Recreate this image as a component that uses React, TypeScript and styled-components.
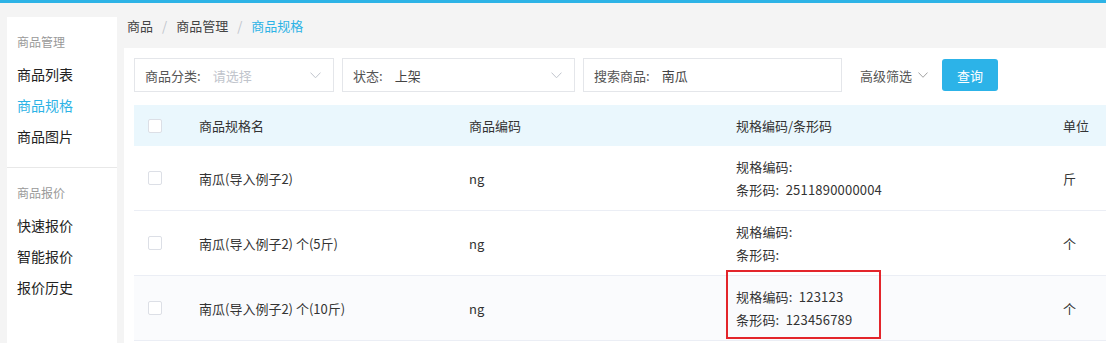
import React from 'react';
import styled, { createGlobalStyle } from 'styled-components';

const GlobalStyle = createGlobalStyle`
  html, body {
    margin: 0;
    padding: 0;
  }
  body {
    background: #f4f4f4;
    font-family: "Noto Sans CJK SC", "Noto Sans", sans-serif;
    font-size: 13px;
    color: #333333;
  }
`;

const TopLine = styled.div`
  height: 3px;
  background: #2db3e6;
`;

const Page = styled.div`
  display: flex;
  align-items: flex-start;
  height: 340px;
  overflow: hidden;
`;

const Sidebar = styled.aside`
  width: 110px;
  margin: 14px 0 0 7px;
  background: #ffffff;
  height: 400px;
  flex-shrink: 0;
`;

const MenuGroup = styled.div`
  padding: 16px 0 15px 10px;
  & + & {
    border-top: 1px solid #e8e8e8;
  }
`;

const GroupTitle = styled.div`
  font-size: 12px;
  line-height: 18px;
  color: #999999;
  margin-bottom: 8px;
`;

const MenuItem = styled.div<{ $active?: boolean }>`
  font-size: 14px;
  line-height: 31px;
  color: ${(p) => (p.$active ? '#2db3e6' : '#222222')};
  cursor: pointer;
`;

const Main = styled.main`
  flex: 1;
  margin-left: 7px;
  min-width: 0;
`;

const Breadcrumb = styled.div`
  height: 45px;
  display: flex;
  align-items: center;
  padding-left: 3px;
  font-size: 13px;
  color: #444444;
`;

const Crumb = styled.span<{ $current?: boolean }>`
  color: ${(p) => (p.$current ? '#2db3e6' : '#444444')};
`;

const Sep = styled.span`
  margin: 0 9px;
  color: #c0c4cc;
`;

const Panel = styled.div`
  background: #ffffff;
  padding: 10px 0 0 10px;
  height: 300px;
`;

const FilterRow = styled.div`
  display: flex;
  align-items: center;
  height: 34px;
`;

const Field = styled.div<{ $w: number }>`
  width: ${(p) => p.$w}px;
  height: 34px;
  box-sizing: border-box;
  border: 1px solid #e4e6ea;
  display: flex;
  align-items: center;
  padding: 0 12px 0 10px;
  margin-right: 8px;
  color: #555555;
`;

const FieldLabel = styled.span`
  color: #555555;
  margin-right: 12px;
  white-space: nowrap;
`;

const FieldValue = styled.span<{ $placeholder?: boolean }>`
  flex: 1;
  color: ${(p) => (p.$placeholder ? '#c0c4cc' : '#444444')};
`;

const Advanced = styled.div`
  display: flex;
  align-items: center;
  gap: 6px;
  margin-left: 10px;
  color: #555555;
  cursor: pointer;
`;

const QueryButton = styled.button`
  margin-left: 14px;
  width: 56px;
  height: 32px;
  border: none;
  border-radius: 3px;
  background: #2cb3e8;
  color: #ffffff;
  font-family: inherit;
  font-size: 13px;
  cursor: pointer;
`;

const Table = styled.div`
  margin-top: 13px;
`;

const cols = '65px 270px 267px 327px 1fr';

const HeadRow = styled.div`
  display: grid;
  grid-template-columns: ${cols};
  height: 41px;
  align-items: center;
  background: #eaf7fd;
  color: #333333;
`;

const Row = styled.div<{ $hover?: boolean }>`
  display: grid;
  grid-template-columns: ${cols};
  height: 64px;
  align-items: center;
  border-bottom: 1px solid #ebeef5;
  background: ${(p) => (p.$hover ? '#fafbfd' : '#ffffff')};
  color: #333333;
`;

const Cell = styled.div`
  position: relative;
`;

const CheckCell = styled.div`
  padding-left: 14px;
  display: flex;
`;

const Checkbox = styled.span`
  width: 14px;
  height: 14px;
  box-sizing: border-box;
  border: 1px solid #dcdfe6;
  border-radius: 2px;
  background: #ffffff;
`;

const Line = styled.div`
  line-height: 23px;
  letter-spacing: 0.2px;
`;

const Highlight = styled.div`
  position: absolute;
  left: -10px;
  top: -15px;
  width: 155px;
  height: 69px;
  box-sizing: border-box;
  border: 2px solid #e3252b;
  pointer-events: none;
`;

const Chevron = ({ color = '#c0c4cc', size = 11 }: { color?: string; size?: number }) => (
  <svg width={size} height={size * 0.6} viewBox="0 0 11 6.6" fill="none">
    <path d="M0.5 0.6 L5.5 5.8 L10.5 0.6" stroke={color} strokeWidth="1" />
  </svg>
);

const rows = [
  { name: '南瓜(导入例子2)', code: 'ng', spec: '', bar: '2511890000004', unit: '斤' },
  { name: '南瓜(导入例子2) 个(5斤)', code: 'ng', spec: '', bar: '', unit: '个' },
  { name: '南瓜(导入例子2) 个(10斤)', code: 'ng', spec: '123123', bar: '123456789', unit: '个', mark: true },
];

export default function App() {
  return (
    <>
      <GlobalStyle />
      <TopLine />
      <Page>
        <Sidebar>
          <MenuGroup>
            <GroupTitle>商品管理</GroupTitle>
            <MenuItem>商品列表</MenuItem>
            <MenuItem $active>商品规格</MenuItem>
            <MenuItem>商品图片</MenuItem>
          </MenuGroup>
          <MenuGroup>
            <GroupTitle>商品报价</GroupTitle>
            <MenuItem>快速报价</MenuItem>
            <MenuItem>智能报价</MenuItem>
            <MenuItem>报价历史</MenuItem>
          </MenuGroup>
        </Sidebar>
        <Main>
          <Breadcrumb>
            <Crumb>商品</Crumb>
            <Sep>/</Sep>
            <Crumb>商品管理</Crumb>
            <Sep>/</Sep>
            <Crumb $current>商品规格</Crumb>
          </Breadcrumb>
          <Panel>
            <FilterRow>
              <Field $w={200}>
                <FieldLabel>商品分类:</FieldLabel>
                <FieldValue $placeholder>请选择</FieldValue>
                <Chevron />
              </Field>
              <Field $w={233}>
                <FieldLabel>状态:</FieldLabel>
                <FieldValue>上架</FieldValue>
                <Chevron />
              </Field>
              <Field $w={259}>
                <FieldLabel>搜索商品:</FieldLabel>
                <FieldValue>南瓜</FieldValue>
              </Field>
              <Advanced>
                高级筛选
                <Chevron color="#999999" size={10} />
              </Advanced>
              <QueryButton>查询</QueryButton>
            </FilterRow>
            <Table>
              <HeadRow>
                <CheckCell>
                  <Checkbox />
                </CheckCell>
                <Cell>商品规格名</Cell>
                <Cell>商品编码</Cell>
                <Cell>规格编码/条形码</Cell>
                <Cell>单位</Cell>
              </HeadRow>
              {rows.map((r, i) => (
                <Row key={i} $hover={i === 2}>
                  <CheckCell>
                    <Checkbox />
                  </CheckCell>
                  <Cell>{r.name}</Cell>
                  <Cell>{r.code}</Cell>
                  <Cell>
                    <Line>规格编码:&nbsp;&nbsp;{r.spec}</Line>
                    <Line>条形码:&nbsp;&nbsp;{r.bar}</Line>
                    {r.mark && <Highlight />}
                  </Cell>
                  <Cell>{r.unit}</Cell>
                </Row>
              ))}
            </Table>
          </Panel>
        </Main>
      </Page>
    </>
  );
}
